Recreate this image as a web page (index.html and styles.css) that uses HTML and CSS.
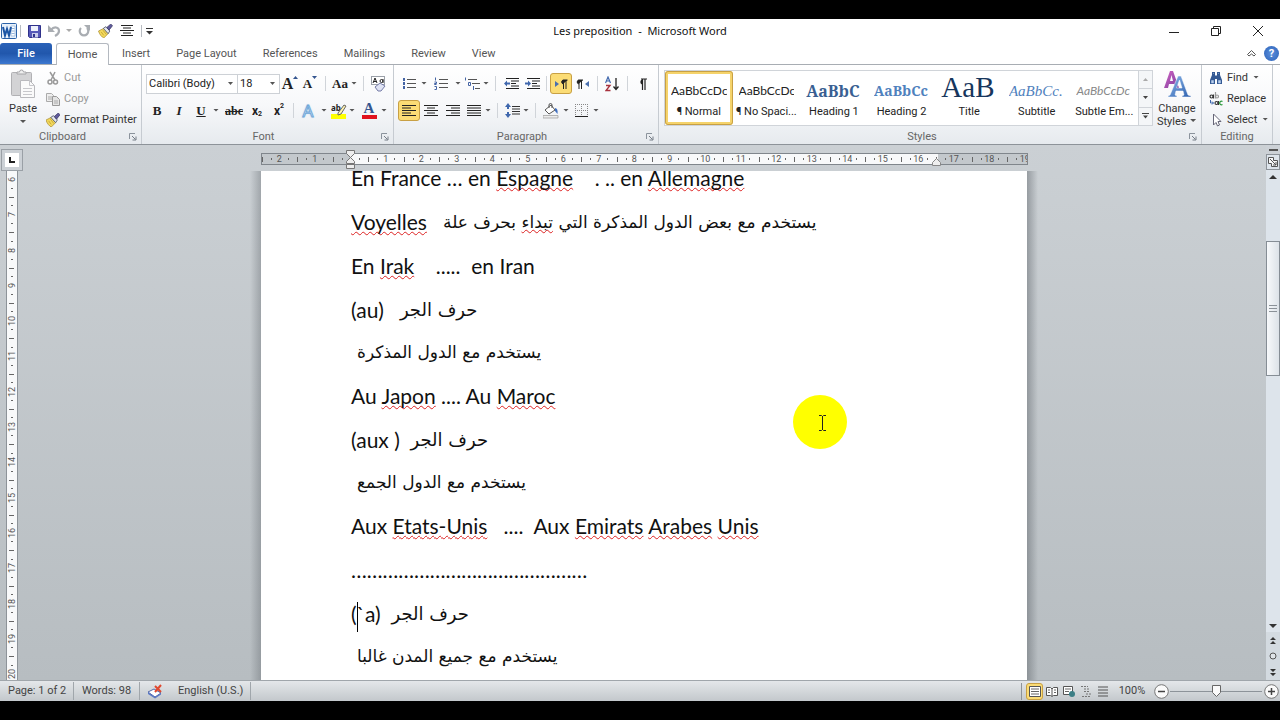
FILE: index.html
```html
<!DOCTYPE html>
<html lang="en">
<head>
<meta charset="utf-8">
<title>Les preposition - Microsoft Word</title>
<link rel="stylesheet" href="styles.css">
</head>
<body>
<svg class="defs" aria-hidden="true">
  <defs>
    <linearGradient id="gBlue" x1="0" y1="0" x2="1" y2="1"><stop offset="0" stop-color="#8db8ea"/><stop offset="1" stop-color="#2c5fae"/></linearGradient>
    <linearGradient id="gPurple" x1="0" y1="0" x2="1" y2="1"><stop offset="0" stop-color="#d264c4"/><stop offset="1" stop-color="#7a3d9c"/></linearGradient>
    <symbol id="brush" viewBox="0 0 16 16">
      <path d="M0 8l6-3 5 6-5 5c-2-1-5-4-6-8z" fill="#f3d95c" stroke="#a88a2c" stroke-width=".8"/>
      <path d="M3 9l3 4M5 7l4 5" stroke="#b8962e" stroke-width=".8"/>
      <path d="M5.500 5l3-2 4.500 5-2 3z" fill="#e4e7ee" stroke="#444c62" stroke-width=".9"/>
      <path d="M9.500 4L14 0l2 2-4 5z" fill="#5f5b9c" stroke="#33315e" stroke-width=".8"/>
    </symbol>
    <symbol id="launcher" viewBox="0 0 8 8"><path d="M.5 6V.5H6" fill="none" stroke="#8b939c"/><path d="M3 3l3.500 3.500M7 3.500V7H3.500" fill="none" stroke="#747c86"/></symbol>
  </defs>
</svg>
<div class="window">
  <header class="titlebar">
    <div class="quick">
      <svg class="word" viewBox="0 0 16 16"><rect x=".5" y=".5" width="15" height="15" rx="1" fill="#e8f1fb" stroke="#2b62a8"/><path d="M10 3h4v10h-4z" fill="#fff" stroke="#7da4d3" stroke-width=".6"/><path d="M10.500 5.500h3M10.500 8h3M10.500 10.500h3" stroke="#7da4d3" stroke-width=".8"/><path d="M2 4l2 8.500 2-6.500 2 6.500 2-8.500" fill="none" stroke="#1c55a4" stroke-width="2"/></svg>
      <span class="bar"></span>
      <button class="q save" aria-label="Save"><svg width="13" height="13" viewBox="0 0 13 13"><path d="M.5.5h12v12h-11l-1-1z" fill="#5558b8" stroke="#2f318a"/><path d="M3 1h7v5H3z" fill="#eef1fb"/><path d="M4 8h6v4.500H4z" fill="#c9cdec"/><path d="M5 9h2v3H5z" fill="#2f318a"/></svg></button>
      <button class="q undo" aria-label="Undo"><svg width="13" height="12" viewBox="0 0 13 12"><path d="M3 5C6 1 11 2 11 6c0 2-2 4-4 5" fill="none" stroke="#a9adb2" stroke-width="2.200"/><path d="M0 0v7h7z" fill="#a9adb2"/></svg></button>
      <span class="arr pale"></span>
      <button class="q redo" aria-label="Repeat"><svg width="12" height="12" viewBox="0 0 12 12"><path d="M3 3a4.300 4.300 0 1 0 6 0" fill="none" stroke="#a9adb2" stroke-width="2.200"/><path d="M6 0h6v6z" fill="#a9adb2"/></svg></button>
      <button class="q brushq" aria-label="Format Painter"><svg width="15" height="14"><use href="#brush"/></svg></button>
      <button class="q" aria-label="Center"><svg width="14" height="12" viewBox="0 0 14 12"><path d="M1 .5h12M3 3h8M0 5.500h14M3 8h8M1 10.500h12" stroke="#222"/></svg></button>
      <span class="bar"></span>
      <button class="q more" aria-label="Customize Quick Access Toolbar"><svg width="7" height="7" viewBox="0 0 7 7"><path d="M0 .5h7" stroke="#333"/><path d="M0 3h7L3.500 6.500z" fill="#333"/></svg></button>
    </div>
    <h1 class="title">Les preposition &nbsp;-&nbsp; Microsoft Word</h1>
    <div class="winbtns">
      <button aria-label="Minimize"><svg width="10" height="10" viewBox="0 0 10 10"><path d="M0 6.500h10" stroke="#222"/></svg></button>
      <button aria-label="Restore"><svg width="10" height="10" viewBox="0 0 10 10"><path d="M.5 2.500h7v7h-7zM2.500 2.500v-2h7v7h-2" fill="none" stroke="#222"/></svg></button>
      <button aria-label="Close"><svg width="10" height="10" viewBox="0 0 10 10"><path d="M0 0l10 10M10 0L0 10" stroke="#222"/></svg></button>
    </div>
  </header>

  <nav class="tabs">
    <button class="tab file">File</button>
    <button class="tab active">Home</button>
    <button class="tab">Insert</button>
    <button class="tab">Page Layout</button>
    <button class="tab">References</button>
    <button class="tab">Mailings</button>
    <button class="tab">Review</button>
    <button class="tab">View</button>
    <div class="help">
      <button aria-label="Minimize the Ribbon"><svg width="9" height="7" viewBox="0 0 9 7"><path d="M.5 4.500l4-4 4 4-1.500 1.500L4.500 4 2 6z" fill="#fff" stroke="#555"/></svg></button>
      <button class="q-mark" aria-label="Help">?</button>
    </div>
  </nav>

  <section class="ribbon">
    <div class="group clipboard">
      <div class="body">
        <button class="paste"><svg width="26" height="30" viewBox="0 0 26 30"><rect x="1.500" y="3.500" width="20" height="23" rx="1" fill="#d3d3d5" stroke="#b1b1b4"/><path d="M7 5V3h2.500a2 2 0 0 1 4 0H16v2z" fill="#efefef" stroke="#a5a5a8"/><path d="M10.500 11.500h9l5 5v12h-14z" fill="#fafafa" stroke="#b9b9bd"/><path d="M19.500 11.500v5h5M13 19.500h9M13 22.500h9M13 25.500h9" fill="none" stroke="#c7c7cb"/></svg><span>Paste</span><span class="arr"></span></button>
        <div class="stack">
          <button class="line off"><svg viewBox="0 0 14 14"><path d="M4 1l5 8M9 1L5 9" stroke="#999" stroke-width="1.500"/><circle cx="4" cy="11" r="2" fill="none" stroke="#999" stroke-width="1.500"/><circle cx="9.500" cy="11" r="2" fill="none" stroke="#999" stroke-width="1.500"/></svg>Cut</button>
          <button class="line off"><svg viewBox="0 0 14 14"><path d="M.5 1.500h5l2 2v6h-7z" fill="#eee" stroke="#aaa"/><path d="M6.500 4.500h4l3 3v6h-7z" fill="#e4e4e4" stroke="#999"/><path d="M2 5h4M2 7h4M8 9h4M8 11h4" stroke="#aaa"/></svg>Copy</button>
          <button class="line"><svg viewBox="0 0 16 16"><use href="#brush"/></svg>Format Painter</button>
        </div>
      </div>
      <div class="label"><span>Clipboard</span><svg><use href="#launcher"/></svg></div>
    </div>

    <div class="group font">
      <div class="body rows">
        <div class="row">
          <select class="box name" aria-label="Font"><option>Calibri (Body)</option></select>
          <select class="box size" aria-label="Font Size"><option>18</option></select>
          <button class="w20 serif grow" aria-label="Grow Font">A<svg width="5" height="3" viewBox="0 0 5 3"><path d="M0 3h5L2.500 0z" fill="#34558f"/></svg></button>
          <button class="w20 serif shrink" aria-label="Shrink Font">A<svg width="5" height="3" viewBox="0 0 5 3"><path d="M0 0h5L2.500 3z" fill="#34558f"/></svg></button>
          <span class="sep"></span>
          <button class="w20 serif case">Aa</button><span class="arr"></span>
          <span class="sep"></span>
          <button class="w20" aria-label="Clear Formatting"><svg width="16" height="16" viewBox="0 0 16 16"><rect x="1.500" y=".5" width="13" height="8" fill="#fff" stroke="#9aa0a8"/><path d="M3 7l2-5 2 5M3.500 5.500h3M13 3v4M10 5a1.500 1.500 0 1 0 3 0 1.500 1.500 0 1 0-3 0" fill="none" stroke="#222"/><path d="M5 11l5-4 5 3-4 5H8z" fill="#dfe3f4" stroke="#747ba6"/></svg></button>
        </div>
        <div class="row">
          <button class="w22 serif b">B</button>
          <button class="w22 serif i">I</button>
          <button class="w22 serif u">U</button><span class="arr w10"></span>
          <button class="w24 serif s">abc</button>
          <button class="w22 x">x<sub>2</sub></button>
          <button class="w22 x">x<sup>2</sup></button>
          <span class="sep w6"></span>
          <button class="w24 fx" aria-label="Text Effects">A</button><span class="arr"></span>
          <button class="w20" aria-label="Text Highlight Color"><svg width="17" height="17" viewBox="0 0 17 17"><path d="M1 12h15v5H1z" fill="#ff0"/><text x="1" y="9" class="tiny">ab</text><path d="M8 11l6-8 2 1-5 8-3 1z" fill="#fff3b0" stroke="#666"/></svg></button><span class="arr w10"></span>
          <button class="w22 serif fc" aria-label="Font Color">A</button><span class="arr w10"></span>
        </div>
      </div>
      <div class="label"><span>Font</span><svg><use href="#launcher"/></svg></div>
    </div>

    <div class="group para">
      <div class="body rows">
        <div class="row">
          <button class="w22" aria-label="Bullets"><svg width="13" height="13" viewBox="0 0 13 13"><path d="M4 2.500h9M4 6.500h9M4 10.500h9" stroke="#555"/><path d="M0 1h2v3H0zM0 5h2v3H0zM0 9h2v3H0z" fill="#4464a5"/></svg></button><span class="arr"></span>
          <button class="w26" aria-label="Numbering"><svg width="14" height="13" viewBox="0 0 14 13"><path d="M5 2.500h9M5 6.500h9M5 10.500h9" stroke="#555"/><path d="M1.500.5v3M.5 5h2v1.500h-2v1h2M.5 9.500h2v3h-2" fill="none" stroke="#4464a5"/></svg></button><span class="arr"></span>
          <button class="w20" aria-label="Multilevel List"><svg width="16" height="14" viewBox="0 0 16 14"><path d="M4 2.500h9M8 6.500h8M11 11.500h5" stroke="#555"/><path d="M1.500.5v3M4.500 5.500h2v3h-2zM9.500 9v4" fill="none" stroke="#4464a5"/></svg></button><span class="arr"></span>
          <span class="sep"></span>
          <button class="w22" aria-label="Decrease Indent"><svg width="15" height="13" viewBox="0 0 15 13"><path d="M2 1.500h13M7 4h8M7 6.500h5M7 9h8M2 11.500h13" stroke="#222"/><path d="M0 6.500l3-3v2h3v2H3v2z" fill="#3f67ad"/></svg></button>
          <button class="w20" aria-label="Increase Indent"><svg width="15" height="13" viewBox="0 0 15 13"><path d="M2 1.500h13M7 4h8M7 6.500h5M7 9h8M2 11.500h13" stroke="#222"/><path d="M6 6.500l-3-3v2H0v2h3v2z" fill="#3f67ad"/></svg></button>
          <span class="sep w8"></span>
          <button class="w22 on" aria-label="Left-to-Right"><svg width="13" height="10" viewBox="0 0 13 10"><path d="M0 2l4 3-4 3z" fill="#4a6fae"/><path d="M8 5a2.200 2.200 0 0 1 0-4h4.500M8.500 1v9M11 1v9" fill="#222" stroke="#222"/></svg></button>
          <button class="w20" aria-label="Right-to-Left"><svg width="13" height="10" viewBox="0 0 13 10"><path d="M13 2L9 5l4 3z" fill="#4a6fae"/><path d="M2.500 5a2.200 2.200 0 0 1 0-4H7M3 1v9M5.500 1v9" fill="#222" stroke="#222"/></svg></button>
          <span class="sep"></span>
          <button class="w20" aria-label="Sort"><svg width="14" height="16" viewBox="0 0 14 16"><path d="M.5 7l2.500-6 2.500 6M1.500 5h3" fill="none" stroke="#3f67ad" stroke-width="1.200"/><path d="M1 9.500h4l-4 5h4.500" fill="none" stroke="#a8323e" stroke-width="1.400"/><path d="M11 2v11M8.500 10.500L11 13.500l2.500-3" fill="none" stroke="#222" stroke-width="1.300"/></svg></button>
          <span class="sep"></span>
          <button class="w20" aria-label="Show/Hide"><svg width="10" height="12" viewBox="0 0 10 12"><path d="M5 6.500a2.700 2.700 0 0 1 0-5z" fill="#222"/><path d="M4 1h6M5.500 1v11M8 1v11" stroke="#222" stroke-width="1.200"/></svg></button>
        </div>
        <div class="row">
          <button class="w22 on" aria-label="Align Left"><svg width="14" height="12" viewBox="0 0 14 12"><path d="M0 .5h14M0 3h9M0 5.500h14M0 8h9M0 10.500h14" stroke="#222"/></svg></button>
          <button class="w22" aria-label="Align Center"><svg width="14" height="12" viewBox="0 0 14 12"><path d="M0 .5h14M3 3h8M0 5.500h14M3 8h8M0 10.500h14" stroke="#222"/></svg></button>
          <button class="w22" aria-label="Align Right"><svg width="14" height="12" viewBox="0 0 14 12"><path d="M0 .5h14M5 3h9M0 5.500h14M5 8h9M0 10.500h14" stroke="#222"/></svg></button>
          <button class="w20" aria-label="Justify"><svg width="14" height="12" viewBox="0 0 14 12"><path d="M0 .5h14M0 3h14M0 5.500h14M0 8h14M0 10.500h14" stroke="#222"/></svg></button><span class="arr"></span>
          <span class="sep"></span>
          <button class="w20" aria-label="Line Spacing"><svg width="15" height="15" viewBox="0 0 15 15"><path d="M7 3.500h8M7 6h8M7 8.500h8M7 11h8" stroke="#333"/><path d="M3 0l3 4H4v2H2V4H0zM3 15l3-4H4V9H2v2H0z" fill="#3f67ad"/></svg></button><span class="arr"></span>
          <span class="sep"></span>
          <button class="w22" aria-label="Shading"><svg width="16" height="16" viewBox="0 0 16 16"><path d="M0 12.500h15V15H0z" fill="#ececec" stroke="#999" stroke-width=".7"/><path d="M2 7l6-5 4 5-6 4z" fill="#fff" stroke="#555"/><path d="M6 5V2a1.500 1.500 0 0 1 3 0v3" fill="none" stroke="#555"/><path d="M12 5c2 0 3 2 2.500 6L12 8z" fill="#3f6fc0"/></svg></button><span class="arr"></span>
          <button class="w22" aria-label="Borders"><svg width="13" height="13" viewBox="0 0 13 13"><path d="M.5 0v12M6.500 0v12M12.500 0v12M0 .5h13M0 6.500h13" stroke="#888" stroke-dasharray="1 1"/><path d="M0 12.500h13" stroke="#222"/></svg></button><span class="arr w10"></span>
        </div>
      </div>
      <div class="label"><span>Paragraph</span><svg><use href="#launcher"/></svg></div>
    </div>

    <div class="group styles">
      <div class="body">
        <div class="gallery">
          <button class="style sel"><span class="demo">AaBbCcDc</span><span class="nm">¶ Normal</span></button>
          <button class="style"><span class="demo">AaBbCcDc</span><span class="nm">¶ No Spaci...</span></button>
          <button class="style h1"><span class="demo">AaBbC</span><span class="nm">Heading 1</span></button>
          <button class="style h2"><span class="demo">AaBbCc</span><span class="nm">Heading 2</span></button>
          <button class="style ti"><span class="demo">AaB</span><span class="nm">Title</span></button>
          <button class="style su"><span class="demo">AaBbCc.</span><span class="nm">Subtitle</span></button>
          <button class="style se"><span class="demo">AaBbCcDc</span><span class="nm">Subtle Em...</span></button>
          <div class="gscroll">
            <button aria-label="Row up"><svg width="5" height="3" viewBox="0 0 5 3"><path d="M0 3h5L2.500 0z" fill="#aaa"/></svg></button>
            <button aria-label="Row down"><svg width="5" height="3" viewBox="0 0 5 3"><path d="M0 0h5L2.500 3z" fill="#444"/></svg></button>
            <button aria-label="More styles"><svg width="7" height="6" viewBox="0 0 7 6"><path d="M0 .5h7" stroke="#444"/><path d="M1 2.500h5L3.500 5.500z" fill="#444"/></svg></button>
          </div>
        </div>
        <button class="change"><svg width="28" height="28" viewBox="0 0 28 28"><path d="M1 18L7 1h3l6 17h-4l-1-4H6l-1 4zM7 11h3L8.500 5z" fill="url(#gPurple)" fill-rule="evenodd"/><path d="M5 27v-1l2-1 8-19h3l7 19 3 1v1h-9v-1l2-1-1-4h-7l-1 4 2 1v1zM13.500 18h5.500l-2.500-8z" fill="url(#gBlue)" fill-rule="evenodd" stroke="#fff" stroke-width=".5"/></svg><span>Change<br>Styles <i class="arr"></i></span></button>
      </div>
      <div class="label"><span>Styles</span><svg><use href="#launcher"/></svg></div>
    </div>

    <div class="group editing">
      <div class="body">
        <div class="stack">
          <button class="line"><svg viewBox="0 0 14 14"><path d="M3 1h3v3l1 1 1-1V1h3v3l2 5v4H8V8H6v5H1V9l2-5z" fill="#345a94"/><path d="M2.500 9.500h2V12h-2zM9.500 9.500h2V12h-2zM4 2.500h1M9 2.500h1" fill="#b9cfee" stroke="#b9cfee" stroke-width=".5"/></svg>Find <span class="arr"></span></button>
          <button class="line"><svg viewBox="0 0 14 14"><g fill="none" stroke="#333" stroke-width="1.200"><circle cx="2.500" cy="4.500" r="1.500"/><path d="M4.500 2.500v4"/><path d="M6.500 0v6.500" stroke="#999"/><circle cx="8" cy="4.500" r="1.500" stroke="#999"/><circle cx="7.500" cy="11" r="1.500"/><path d="M9.500 9v4"/><path d="M13.500 9.500a1.800 1.800 0 1 0 0 3" stroke="#2c9a3c"/></g><path d="M1.500 8v3h3M3 9.500L4.500 11 3 12.500" fill="none" stroke="#3f67ad"/></svg>Replace</button>
          <button class="line"><svg viewBox="0 0 14 14"><path d="M4.500 1v11l2.500-2.500L8.500 13l2-1L9 8.500h3z" fill="#fff" stroke="#667"/></svg>Select <span class="arr"></span></button>
        </div>
      </div>
      <div class="label"><span>Editing</span></div>
    </div>
  </section>

  <main class="work">
    <div class="vcol">
      <button class="corner" aria-label="Tab selector"><span><svg width="6" height="6" viewBox="0 0 6 6"><path d="M1 0v5h5" fill="none" stroke="#222" stroke-width="2"/></svg></span></button>
      <div class="vruler"><div class="vunits">
        <span>6</span><span>7</span><span>8</span><span>9</span><span>10</span><span>11</span><span>12</span><span>13</span><span>14</span><span>15</span><span>16</span><span>17</span><span>18</span><span>19</span><span>20</span>
      </div></div>
    </div>
    <div class="canvas">
      <div class="hwrap">
        <div class="hruler"><div class="hunits">
          <span>2</span><span>1</span><span></span><span>1</span><span>2</span><span>3</span><span>4</span><span>5</span><span>6</span><span>7</span><span>8</span><span>9</span><span>10</span><span>11</span><span>12</span><span>13</span><span>14</span><span>15</span><span>16</span><span>17</span><span>18</span><span>19</span>
        </div></div>
        <svg class="indent" width="9" height="20" viewBox="0 0 9 20"><path d="M.5.5h8v3l-4 4-4-4zM4.500 7.500l4 4v2h-8v-2zM.5 14.500h8v4h-8z" fill="#eee" stroke="#777"/></svg>
        <svg class="rindent" width="9" height="8" viewBox="0 0 9 8"><path d="M.5 7.500v-3l4-4 4 4v3z" fill="#eee" stroke="#888"/></svg>
      </div>
      <article class="page">
        <div class="text" lang="fr">
          <p>En France … en <u>Espagne</u> &nbsp;&nbsp; . .. en <u>Allemagne</u></p>
          <p><u>Voyelles</u> &nbsp; <bdo class="ar" dir="rtl" lang="ar">يستخدم مع بعض الدول المذكرة التي <u>تبداء</u> بحرف علة</bdo></p>
          <p>En <u>Irak</u> &nbsp;&nbsp; ..... &nbsp;en Iran</p>
          <p class="tight">(au) &nbsp;&nbsp;<span class="ar" dir="rtl" lang="ar">حرف الجر</span></p>
          <p class="only"><span class="ar" dir="rtl" lang="ar">يستخدم مع الدول المذكرة</span></p>
          <p>Au <u>Japon</u> .... Au <u>Maroc</u></p>
          <p class="tight">(aux ) &nbsp;<span class="ar" dir="rtl" lang="ar">حرف الجر</span></p>
          <p class="only"><span class="ar" dir="rtl" lang="ar">يستخدم مع الدول الجمع</span></p>
          <p>Aux <u>Etats-Unis</u> &nbsp; .... &nbsp;Aux <u>Emirats</u> <u>Arabes</u> <u>Unis</u></p>
          <p>………………………………………</p>
          <p class="tight">(<span class="caret"></span>`a) &nbsp;<span class="ar" dir="rtl" lang="ar">حرف الجر</span></p>
          <p class="only"><span class="ar" dir="rtl" lang="ar">يستخدم مع جميع المدن غالبا</span></p>
        </div>
        <svg class="pointer" width="54" height="54" viewBox="0 0 54 54"><circle cx="27" cy="27" r="27" fill="#ff0"/><path d="M26 20.500h2.500l1 1 1-1H33M26 35.500h2.500l1-1 1 1H33M29.500 21v14" fill="none" stroke="#222"/></svg>
      </article>
    </div>
    <div class="vscroll">
      <span class="split"></span>
      <button class="toggle" aria-label="View Ruler"><svg width="12" height="12" viewBox="0 0 12 12"><path d="M1.500 1.500h5v3h4v6h-6v-3h-3zM3 3l6 6M9 6v3H6" fill="#f8f8f8" stroke="#555"/></svg></button>
      <button class="up" aria-label="Scroll up"><svg width="8" height="4" viewBox="0 0 8 4"><path d="M0 4h8L4 0z" fill="#333"/></svg></button>
      <span class="t1"></span>
      <span class="thumb"><svg width="8" height="7" viewBox="0 0 8 7"><path d="M0 .5h8M0 3.500h8M0 6.500h8" stroke="#8a9198"/></svg></span>
      <span class="t2"></span>
      <button class="down" aria-label="Scroll down"><svg width="8" height="4" viewBox="0 0 8 4"><path d="M0 0h8L4 4z" fill="#333"/></svg></button>
      <button class="nav" aria-label="Previous Page"><svg width="6" height="7" viewBox="0 0 6 7"><path d="M0 3h6L3 0zM0 7h6L3 4z" fill="#333"/></svg></button>
      <button class="nav" aria-label="Select Browse Object"><svg width="8" height="8" viewBox="0 0 8 8"><circle cx="4" cy="4" r="3" fill="#dfe4e8" stroke="#555"/></svg></button>
      <button class="nav" aria-label="Next Page"><svg width="6" height="7" viewBox="0 0 6 7"><path d="M0 0h6L3 3zM0 4h6L3 7z" fill="#333"/></svg></button>
    </div>
  </main>

  <footer class="status">
    <span class="st s1">Page: 1 of 2</span>
    <span class="st s2">Words: 98</span>
    <span class="st s3"><svg width="16" height="15" viewBox="0 0 16 15"><path d="M1 8l6-3 7 4-6 4z" fill="#fff" stroke="#5468a8"/><path d="M1 8v2l7 4.500 6-4V9l-6 4z" fill="#5a78c4"/><path d="M8 2l6 6M14 1L8 8" stroke="#e0482f" stroke-width="2"/></svg></span>
    <span class="st s4">English (U.S.)</span>
    <div class="views">
      <button class="on" aria-label="Print Layout"><svg width="12" height="11" viewBox="0 0 12 11"><path d="M.5.5h11v10H.5z" fill="#fff" stroke="#555"/><path d="M2 3h8M2 5.500h8M2 8h8" stroke="#666"/></svg></button>
      <button aria-label="Full Screen Reading"><svg width="12" height="11" viewBox="0 0 12 11"><path d="M.5 1.500h4L6 3l1.500-1.500h4v8h-4L6 10.500 4.500 9.500h-4zM6 3v7" fill="#fff" stroke="#555"/><path d="M2 4h2M2 6.500h2M8 4h2M8 6.500h2" stroke="#666"/></svg></button>
      <button aria-label="Web Layout"><svg width="12" height="11" viewBox="0 0 12 11"><path d="M.5.5h9v8h-9z" fill="#fff" stroke="#555"/><path d="M2 3h6M2 5.500h4" stroke="#666"/><circle cx="9" cy="8" r="3" fill="#3c7f86"/></svg></button>
      <button aria-label="Outline"><svg width="12" height="11" viewBox="0 0 12 11"><path d="M1 .5h7M4 3h6M4 5.500h6M6 8h5M2 10.500h8" stroke="#777" stroke-dasharray="2 1"/></svg></button>
      <button aria-label="Draft"><svg width="10" height="11" viewBox="0 0 10 11"><path d="M0 1h10M0 4h10M0 7h10M0 10h10" stroke="#555"/></svg></button>
    </div>
    <button class="pct">100%</button>
    <button class="zoom" aria-label="Zoom out"><svg width="15" height="15" viewBox="0 0 15 15"><circle cx="7.500" cy="7.500" r="6.800" fill="#fafafa" stroke="#777"/><path d="M4 7.500h7" stroke="#444" stroke-width="1.500"/></svg></button>
    <input class="slider" type="range" min="0" max="100" value="50" aria-label="Zoom">
    <button class="zoom" aria-label="Zoom in"><svg width="15" height="15" viewBox="0 0 15 15"><circle cx="7.500" cy="7.500" r="6.800" fill="#fafafa" stroke="#777"/><path d="M4 7.500h7M7.500 4v7" stroke="#444" stroke-width="1.500"/></svg></button>
  </footer>
</div>
</body>
</html>
```

FILE: styles.css
```css
* { box-sizing: border-box; }
body {
  margin: 0;
  background: #000;
  color: #333;
  font: 11px/14px Roboto, "Noto Sans", sans-serif;
}
button {
  margin: 0;
  padding: 0;
  border: 0;
  background: none;
  color: inherit;
  font: inherit;
  display: flex;
  align-items: center;
  justify-content: center;
  flex: none;
  white-space: nowrap;
}
svg { display: block; flex: none; }
.defs { position: absolute; width: 0; height: 0; }
.window {
  height: 100vh;
  padding: 19px 0;
  display: flex;
  flex-direction: column;
}

/* title bar */
.titlebar {
  display: grid;
  grid-template-columns: 1fr auto 1fr;
  align-items: center;
  height: 24px;
  background: #fff;
}
.quick { display: flex; align-items: center; padding-left: 1px; height: 22px; }
.word { width: 16px; height: 16px; }
.bar { width: 1px; height: 12px; background: #b8bcc2; margin: 0 3px; }
.q { width: 22px; }
.save { width: 20px; }
.undo { width: 20px; }
.redo { width: 20px; }
.brushq { width: 22px; }
.q.more { width: 8px; }
.title { margin: 0; font: 400 11px/14px "Noto Sans", sans-serif; color: #111; }
.winbtns { display: flex; justify-content: flex-end; align-items: center; padding-right: 1px; }
.winbtns button { width: 42px; height: 22px; }

.arr {
  width: 8px;
  height: 4px;
  flex: none;
  display: inline-block;
  background: #555;
  clip-path: polygon(1px 0, 7px 0, 4px 3px);
}
.arr.pale { background: #aaa; margin: 0 1px; }

/* tabs */
.tabs {
  display: flex;
  height: 22px;
  background: #fff;
  border-bottom: 1px solid #a8adb3;
  color: #555;
}
.tab { padding: 0 13px; height: 21px; }
.file {
  width: 52px;
  margin-right: 4px;
  color: #fff;
  font-weight: 500;
  border-radius: 3px 3px 0 0;
  background: linear-gradient(#2a62b8, #2157ac 50%, #3c78d0);
}
.active {
  height: 22px;
  width: 53px;
  background: #fff;
  border: 1px solid #b4b9c0;
  border-bottom: 0;
  border-radius: 3px 3px 0 0;
}
.help { margin-left: auto; display: flex; gap: 8px; padding-right: 1px; }
.q-mark {
  width: 15px;
  height: 15px;
  align-self: center;
  border-radius: 8px;
  background: radial-gradient(#5b8fdc, #2c62b8);
  color: #fff;
  font-weight: 700;
}

/* ribbon */
.ribbon {
  display: flex;
  height: 80px;
  background: linear-gradient(#fff, #f7f8fa 50%, #e6eaee);
  border-bottom: 1px solid #8d9399;
}
.group { display: flex; flex: none; flex-direction: column; border-right: 1px solid #c6cbd1; }
.clipboard { width: 142px; }
.font { width: 252px; }
.para { width: 265px; }
.group.styles { flex: 1; min-width: 0; }
.editing { width: 71px; margin-right: 7px; }
.body { flex: 1; display: flex; }
.label { display: flex; align-items: center; height: 15px; padding: 0 4px; color: #666; }
.label span { flex: 1; text-align: center; }
.clipboard .label span, .styles .label span { padding-right: 8px; }
.label svg { width: 8px; height: 8px; }
.rows { flex-direction: column; gap: 6px; padding: 8px 0 0 4px; }
.row { display: flex; align-items: center; height: 21px; }
.row button { height: 21px; }
.w20 { width: 20px; }
.w22 { width: 22px; }
.w24 { width: 24px; }
.w26 { width: 26px; }
.w10 { width: 10px; }
.sep { width: 10px; height: 15px; flex: none; background: linear-gradient(#d0d4d9, #d0d4d9) center / 1px 100% no-repeat; }
.sep.w6 { width: 6px; }
.sep.w8 { width: 8px; }
.on { background: #fbdc75; border: 1px solid #c8a044; border-radius: 3px; }
.box {
  height: 20px;
  margin: 0;
  padding: 0 2px;
  font: inherit;
  color: #222;
  border: 1px solid #cdd1d6;
  border-radius: 0;
  appearance: none;
  background: #fff url("data:image/svg+xml,%3Csvg xmlns='http://www.w3.org/2000/svg' width='5' height='3'%3E%3Cpath d='M0 0h5L2.500 3z' fill='%23555'/%3E%3C/svg%3E") right 4px center no-repeat;
}
.name { width: 92px; }
.size { width: 42px; border-left: 0; }
.serif { font-family: "Liberation Serif", serif; font-weight: 700; color: #222; }
.grow { font-size: 16px; }
.shrink { font-size: 13px; }
.grow svg, .shrink svg { align-self: flex-start; margin-top: 3px; }
.case { font-size: 13px; }
.b, .i, .u { font-size: 13px; }
.i { font-style: italic; }
.u { text-decoration: underline; }
.s { font-size: 12px; text-decoration: line-through; }
.x { font-weight: 700; font-size: 12px; color: #222; }
.x sub, .x sup { font-size: 7px; line-height: 7px; }
.x sub { align-self: flex-end; padding-bottom: 3px; }
.x sup { align-self: flex-start; padding-top: 3px; }
.fx { font: 17px/20px "Noto Sans", sans-serif; color: #fff; -webkit-text-stroke: 1px #6ea6d8; text-shadow: 0 0 2px #9cc6ec; }
.fc { font-size: 15px; color: #34558f; line-height: 12px; }
.row .fc { background: linear-gradient(#e0121e, #e0121e) center bottom 2px / 15px 4px no-repeat; padding-bottom: 6px; }
.tiny { font: 700 8px "Noto Sans", sans-serif; fill: #222; }

.paste { width: 46px; flex-direction: column; justify-content: flex-start; padding-top: 4px; gap: 3px; }
.paste .arr { margin-top: 1px; }
.stack { display: flex; flex-direction: column; padding-top: 2px; }
.line { height: 21px; justify-content: flex-start; gap: 4px; }
.line svg { width: 14px; height: 14px; }
.off { color: #999; }

.gallery {
  flex: 1;
  min-width: 0;
  display: flex;
  height: 56px;
  margin: 5px 0 0 5px;
  border: 1px solid #d0d4d9;
  background: #fff;
}
.style {
  flex: 1 1 0;
  min-width: 0;
  flex-direction: column;
  justify-content: flex-end;
  padding: 0 6px 4px;
  overflow: hidden;
  color: #222;
}
.sel { padding: 0 3px 1px; border: 3px solid #f5d36b; outline: 1px solid #c8a044; outline-offset: -1px; border-radius: 3px; }
.demo { width: 100%; height: 24px; line-height: 24px; overflow: hidden; white-space: nowrap; text-align: left; font-family: Lato, sans-serif; font-size: 12px; }
.nm { line-height: 18px; white-space: nowrap; }
.h1 .demo { font: 700 16px/24px "Noto Serif", "Liberation Serif", serif; color: #3a5f92; }
.h2 .demo { font: 700 14px/24px "Noto Serif", "Liberation Serif", serif; color: #4f81bd; }
.ti .demo { font: 29px/32px "Liberation Serif", serif; height: 34px; color: #17365d; }
.su .demo { font: italic 15px/24px "Liberation Serif", serif; color: #4f81bd; }
.se .demo { font-style: italic; color: #888; }
.gscroll { width: 14px; display: flex; flex-direction: column; border-left: 1px solid #d0d4d9; background: #f4f6f8; }
.gscroll button { flex: 1; }
.gscroll button + button { border-top: 1px solid #d0d4d9; }
.change { width: 48px; flex-direction: column; justify-content: flex-start; padding-top: 5px; gap: 4px; line-height: 13px; }
.change .arr { vertical-align: 2px; }
.editing .stack { padding-left: 7px; }

/* workspace */
.work { flex: 1; min-height: 0; display: flex; background: linear-gradient(#cbd0d4, #b7bdc1); }
.vcol { width: 24px; display: flex; flex-direction: column; }
.corner { width: 24px; height: 26px; padding-top: 3px; }
.corner span {
  width: 22px;
  height: 22px;
  display: flex;
  align-items: center;
  justify-content: center;
  border: 1px solid #9aa0a6;
  background: linear-gradient(#fff, #fff) center / 14px 14px no-repeat #ccd1d6;
}
.vruler { flex: 1; min-height: 0; width: 12px; margin-left: 6px; overflow: hidden; background: #f8f9fa; border: solid #8d9399; border-width: 0 1px; }
.vunits { margin-top: -9px; font-size: 9px; color: #555; }
.vunits span {
  display: flex;
  align-items: center;
  justify-content: center;
  height: 35px;
  line-height: 10px;
  writing-mode: vertical-rl;
  transform: rotate(180deg);
  background:
    linear-gradient(#666, #666) center bottom / 5px 1px no-repeat,
    linear-gradient(#666, #666) center 8px / 2px 1px no-repeat,
    linear-gradient(#666, #666) center 26px / 2px 1px no-repeat;
}
.vunits span:nth-child(3n) { height: 36px; }
.canvas {
  flex: 1;
  display: flex;
  flex-direction: column;
  align-items: center;
  margin-right: 2px;
  overflow: hidden;
  background:
    linear-gradient(90deg, transparent, rgba(90, 96, 102, .4)) calc(50% - 388px) 26px / 12px 100% no-repeat,
    linear-gradient(270deg, transparent, rgba(90, 96, 102, .5)) calc(50% + 388px) 26px / 12px 100% no-repeat;
}
.hwrap { position: relative; width: 767px; height: 26px; padding-top: 8px; }
.hruler {
  height: 12px;
  overflow: hidden;
  border: 1px solid #80868c;
  background: linear-gradient(90deg, #c3c8cc 89px, #f8f9fa 89px, #f8f9fa 676px, #c3c8cc 676px);
}
.hunits { display: grid; grid-template-columns: repeat(22, 1fr); width: 781px; font-size: 9px; line-height: 10px; color: #555; }
.hunits span {
  height: 10px;
  text-align: center;
  background:
    linear-gradient(#666, #666) left center / 1px 5px no-repeat,
    linear-gradient(#666, #666) 9px center / 1px 2px no-repeat,
    linear-gradient(#666, #666) 26px center / 1px 2px no-repeat;
}
.indent { position: absolute; left: 85px; top: 5px; }
.rindent { position: absolute; left: 671px; top: 13px; }
.page {
  position: relative;
  flex: 1;
  min-height: 0;
  width: 766px;
  overflow: hidden;
  background: #fff;
}
.text { margin-top: -15px; padding-left: 90px; font: 21px/44px Lato, "DejaVu Sans", sans-serif; color: #111; }
.text p { margin: 0; height: 44px; white-space: nowrap; }
.text .tight { height: 42px; }
.only { padding-left: 6px; }
.text u { text-decoration: underline wavy #d22 1px; text-underline-offset: 1px; text-decoration-skip-ink: none; }
.ar { font-family: "DejaVu Sans", sans-serif; font-size: 17px; line-height: 20px; vertical-align: 2px; unicode-bidi: isolate; }
.tight .ar { font-size: 18px; }
.caret { display: inline-block; width: 1px; height: 30px; margin-right: -1px; background: #000; vertical-align: middle; }
.pointer { position: absolute; left: 532px; top: 224px; }

.vscroll { width: 14px; display: flex; flex-direction: column; background: #dde4eb; }
.split { height: 9px; background: linear-gradient(#555, #555) center / 9px 2px no-repeat #ccd1d6; }
.toggle { height: 16px; border: 1px solid #8d9399; }
.up { height: 14px; }
.t1 { flex: 57; }
.thumb { flex: 134; display: flex; align-items: center; justify-content: center; border: 1px solid #858d95; background: linear-gradient(90deg, #f7f9fb, #dce2e8); }
.t2 { flex: 244; }
.down { height: 13px; }
.nav { height: 16px; background: #d3dae0; }

/* status bar */
.status {
  display: flex;
  align-items: center;
  height: 21px;
  background: linear-gradient(#e4e7ea, #c3c8cc);
  border-top: 1px solid #a0a6ab;
  color: #444;
}
.st { display: flex; align-items: center; height: 18px; padding-left: 8px; }
.s1 { width: 74px; border-right: 1px solid #a0a6ab; }
.s2 { width: 66px; border-right: 1px solid #a0a6ab; }
.s3 { width: 30px; padding-left: 7px; }
.s4 { width: 81px; border-right: 1px solid #a0a6ab; }
.views { margin-left: auto; display: flex; align-items: center; padding-left: 4px; border-left: 1px solid #8d9399; }
.views button { width: 17px; height: 17px; }
.pct { width: 40px; margin-left: 1px; }
.zoom { width: 18px; }
.slider { width: 92px; height: 16px; margin: 0; appearance: none; background: linear-gradient(#8d9399, #8d9399) center / 100% 1px no-repeat; }
.slider::-webkit-slider-thumb { appearance: none; width: 9px; height: 12px; background: url("data:image/svg+xml,%3Csvg xmlns='http://www.w3.org/2000/svg' width='9' height='12'%3E%3Cpath d='M.5.5h8v7l-4 4-4-4z' fill='%23fafafa' stroke='%23666'/%3E%3C/svg%3E"); }
```
